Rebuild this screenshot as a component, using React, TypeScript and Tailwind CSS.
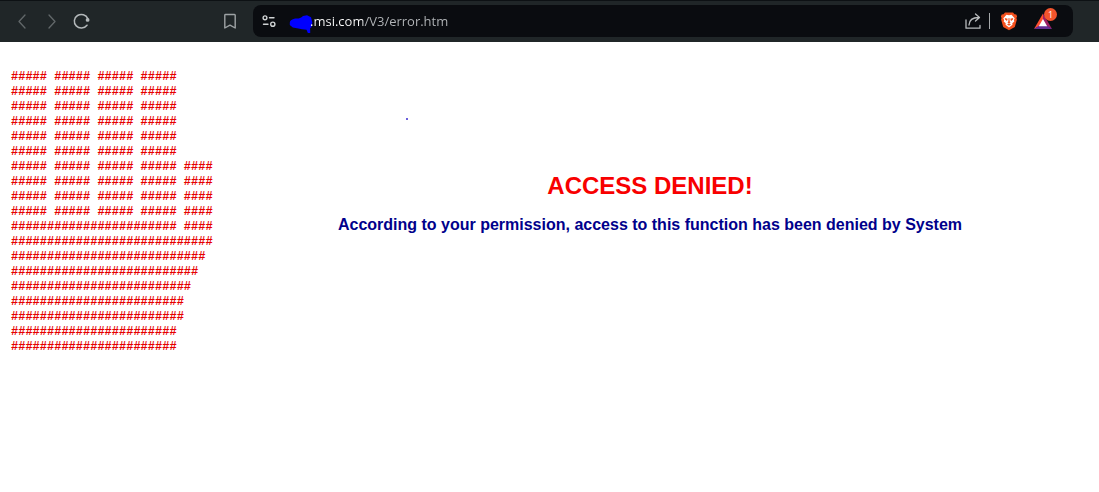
import { useState } from "react";

const HAND = [
  ...Array(6).fill("##### ##### ##### #####"),
  ...Array(4).fill("##### ##### ##### ##### ####"),
  "####################### ####",
  "############################",
  "###########################",
  "##########################",
  "#########################",
  "########################",
  "########################",
  "#######################",
  "#######################",
].join("\n");

function Toolbar() {
  const [url, setUrl] = useState(".msi.com/V3/error.htm");
  return (
    <header className="flex h-[42px] items-center border-t border-[#0d1114] bg-[#202628] pr-[26px] pb-px pl-3">
      <nav aria-label="Browser" className="flex shrink-0 items-center gap-[10px]">
        <button type="button" aria-label="Back" className="flex size-5 items-center justify-center">
          <svg width="20" height="20" viewBox="0 0 20 20" fill="none" stroke="#62686a" strokeWidth="1.3" strokeLinecap="round" strokeLinejoin="round">
            <path d="M13 4 7 10.5 13 17" />
          </svg>
        </button>
        <button type="button" aria-label="Forward" className="flex size-5 items-center justify-center">
          <svg width="20" height="20" viewBox="0 0 20 20" fill="none" stroke="#62686a" strokeWidth="1.3" strokeLinecap="round" strokeLinejoin="round">
            <path d="M7 4 13 10.5 7 17" />
          </svg>
        </button>
        <button type="button" aria-label="Reload" className="flex size-5 items-center justify-center">
          <svg width="20" height="20" viewBox="0 0 20 20" fill="none" stroke="#b3b8ba" strokeWidth="1.5" strokeLinecap="round">
            <path d="M15.8 7.600A7 6.800 0 1 0 15 14.200" />
            <circle cx="15.600" cy="8.900" r="1.900" fill="#b3b8ba" stroke="none" />
          </svg>
        </button>
      </nav>
      <div className="ml-[128px] flex min-w-0 grow items-center gap-[13px]">
        <button type="button" aria-label="Bookmark this page" className="flex size-5 shrink-0 items-center justify-center">
          <svg width="20" height="20" viewBox="0 0 20 20" fill="none" stroke="#9da2a4" strokeWidth="1.4" strokeLinejoin="round">
            <path d="M5.500 3.500h9a.7.7 0 0 1 .7.7V17L10 14.200 4.800 17V4.200a.7.7 0 0 1 .7-.7Z" />
          </svg>
        </button>
        <div className="flex h-8 min-w-0 grow items-center rounded-lg bg-[#0a0c10] pr-[17px] pl-[6px]">
          <button type="button" aria-label="Site settings" className="flex size-5 shrink-0 items-center justify-center">
            <svg width="20" height="20" viewBox="0 0 20 20" fill="none" stroke="#d0d3d4" strokeWidth="1.4" strokeLinecap="round">
              <circle cx="6" cy="6.800" r="1.900" />
              <path d="M10.500 6.800H15M4.500 13.200H9" />
              <circle cx="13.800" cy="13.200" r="2.100" />
            </svg>
          </button>
          <svg width="24" height="24" viewBox="0 0 24 24" className="ml-[10px] shrink-0" aria-hidden="true">
            <path fill="#0000ff" d="M.8 14C.8 11 4 9.500 8 9.500c2 0 4-.6 6-2.500l4-.8 4 2 1.300 5-.8 5-1.300.8V24l-2.200.3-1.500-3.500-4.500-.6-5-1-4.200-.7L.8 16Z" />
          </svg>
          <input
            aria-label="Address"
            value={url}
            spellCheck={false}
            onChange={(e) => setUrl(e.target.value)}
            className="-ml-[3px] h-6 min-w-0 grow bg-linear-to-r from-white from-[53px] to-[#b4b7ba] to-[53px] bg-clip-text font-['Open_Sans','Noto_Sans',sans-serif] text-[13px] text-transparent caret-white outline-none"
          />
          <button type="button" aria-label="Share" className="flex size-5 shrink-0 items-center justify-center">
            <svg width="20" height="20" viewBox="0 0 20 20" fill="none" stroke="#b8bbbd" strokeWidth="1.3" strokeLinecap="round" strokeLinejoin="round">
              <path d="M3 9v8.200h14V14.500" />
              <path d="M6 14c.3-5 3.500-7.500 9.500-7.500M12.500 3l4 3.500-4 3.500" />
            </svg>
          </button>
          <span className="mr-[9px] ml-[6px] h-4 w-px shrink-0 bg-[#a5a8aa]" />
          <button type="button" aria-label="Brave Shields" className="flex size-5 shrink-0 items-center justify-center">
            <svg width="20" height="20" viewBox="0 0 20 20">
              <path fill="#f4511e" d="M6 1.500h8l1.500 1.700 1.800.3.8 2-.7 1.500.5 1.500-2.100 7.500L10 19.300 4.200 16 2.100 8.500l.5-1.500-.7-1.500.8-2 1.800-.3Z" />
              <path fill="#fff" d="m10 4.300 2.500-.6 3.200 3.500-.8 1.700.4 1.600-2 1.800.2 1.500L10 16.500l-3.500-2.700.2-1.500-2-1.800.4-1.600-.8-1.700 3.200-3.500Z" />
              <path fill="#f4511e" d="m5.800 7 2.900.7-.7 2.200-2-1.400ZM14.200 7l-2.900.7.7 2.200 2-1.400ZM9.600 7h.8l.3 3.500.8 1-1.500 1-1.500-1 .8-1ZM8 13.300l2-.9 2 .9-2 1.400Z" />
            </svg>
          </button>
          <button type="button" aria-label="Brave Rewards, 1 notification" className="relative ml-[13px] flex size-6 shrink-0 items-center justify-center">
            <svg width="24" height="24" viewBox="0 0 24 24">
              <path fill="#ff5030" d="M11 4.500 2 20l9-5Z" />
              <path fill="#9e1f63" d="M11 4.500 20 20l-9-5Z" />
              <path fill="#662d91" d="M2 20h18l-9-6Z" />
              <path fill="#fff" d="m11 10 4.200 7.200H6.800Z" />
            </svg>
            <span className="absolute -top-px -right-px flex size-[13px] items-center justify-center rounded-full bg-[#f2542d] font-['Open_Sans',sans-serif] text-[9px] leading-none text-white">1</span>
          </button>
        </div>
      </div>
    </header>
  );
}

export default function App() {
  return (
    <div className="min-h-screen bg-white">
      <Toolbar />
      <main className="flex items-start pt-7 pl-[11px]">
        <pre className="w-[190px] shrink-0 font-['Liberation_Mono',monospace] text-xs leading-[15px] font-bold text-[#e60000]">{HAND}</pre>
        <section className="grow text-center font-['Liberation_Sans',Arial,sans-serif] font-bold">
          <div className="flex h-[100px] justify-start pt-12 pl-[205px]">
            <span className="size-[2px] rounded-full bg-[#3a2ad0]" />
          </div>
          <h1 className="text-2xl leading-8 text-[#f80000]">ACCESS DENIED!</h1>
          <p className="mt-[11px] text-base leading-6 text-[#00008b]">
            According to your permission, access to this function has been denied by System
          </p>
        </section>
      </main>
    </div>
  );
}
